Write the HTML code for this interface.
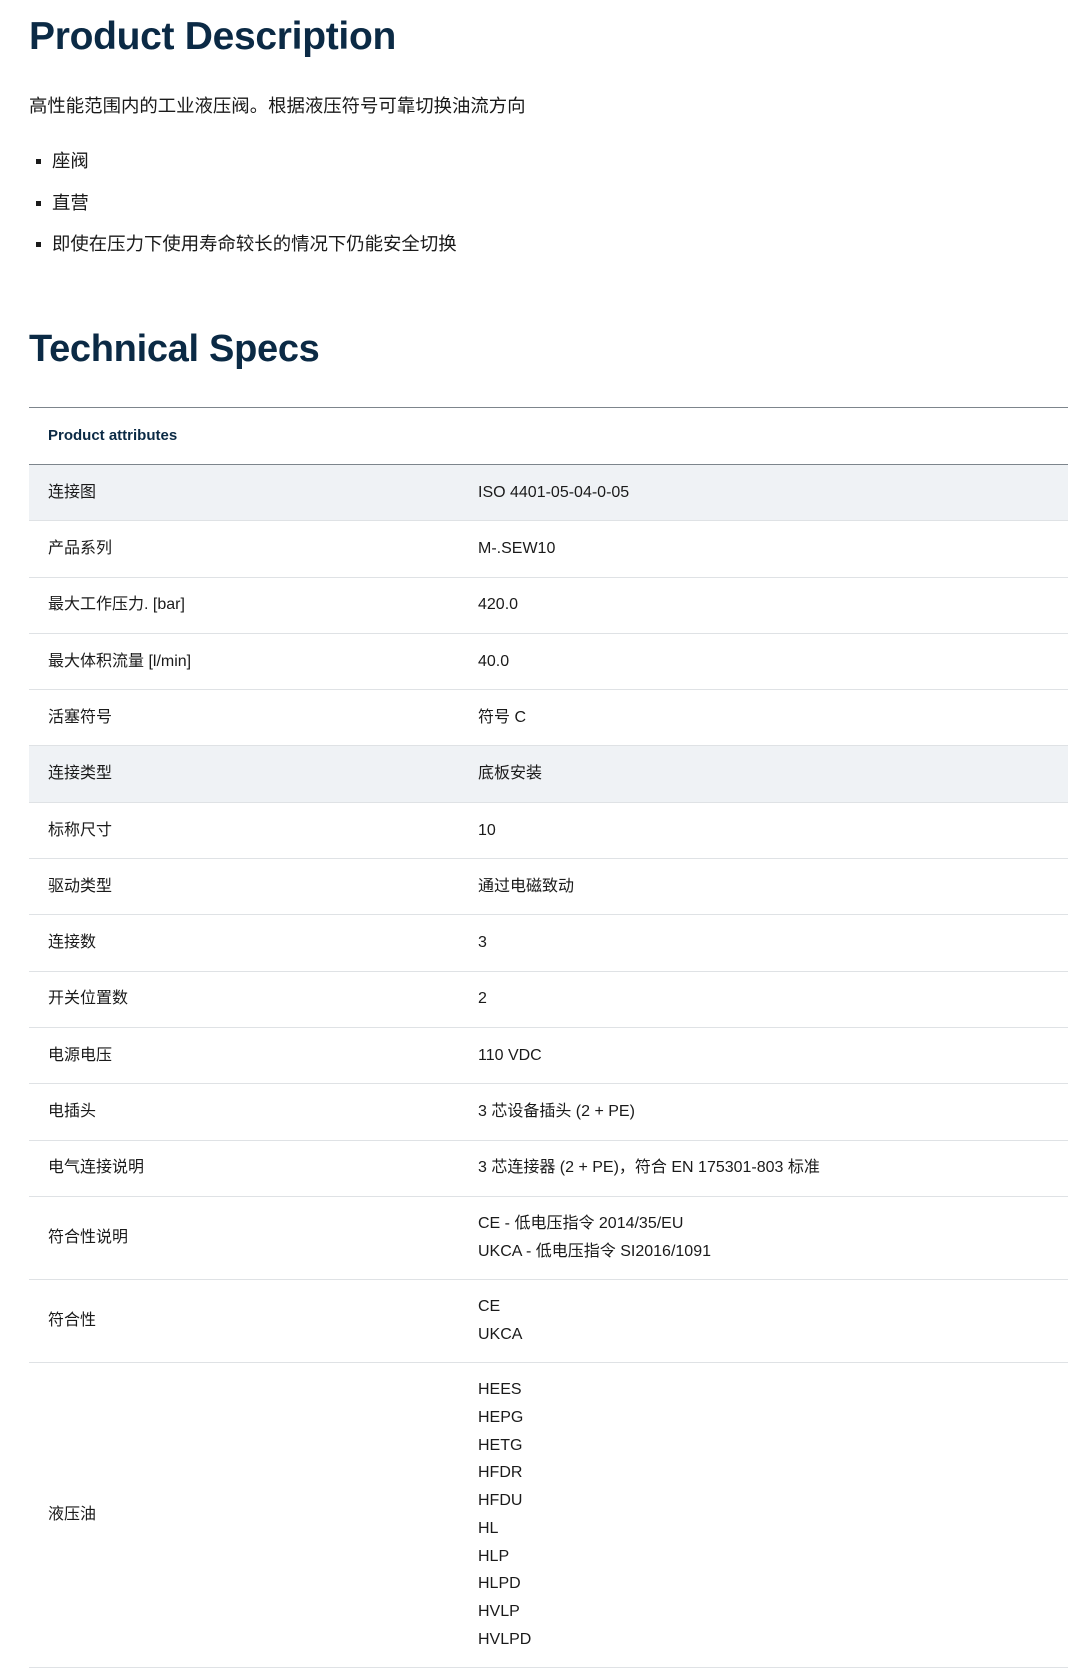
<!DOCTYPE html>
<html><head><meta charset="utf-8"><style>
*{margin:0;padding:0;box-sizing:border-box}
body{width:1068px;height:1671px;background:#fff;font-family:"Liberation Sans","Noto Sans CJK SC",sans-serif;color:#1a1a1a;position:relative;overflow:hidden}
h2{position:absolute;left:29px;font-size:38px;font-weight:bold;color:#0b2a45;line-height:1;letter-spacing:-0.3px}
.p{position:absolute;left:29px;font-size:18.4px;line-height:24px}
.b{position:absolute;left:36px;font-size:18.4px;line-height:24px}
.b:before{content:"";position:absolute;left:0;top:10px;width:5px;height:5px;background:#1a1a1a}
.b span{margin-left:16px}
table{position:absolute;left:29px;top:407px;width:1039px;border-collapse:collapse;font-size:16px}
td{padding:0 0 0 19px;vertical-align:middle;border-bottom:1px solid #dfe2e5;line-height:27.7px}
td:first-child{width:430px}
tr.h td{font-weight:bold;color:#0b2a45;border-top:1px solid #7d858c;border-bottom:1px solid #7d858c;height:57px;font-size:15px}
tr.g td{background:#eff2f5}
.r1 td{height:56.3px}
.r2 td{height:83px}
.r10 td{height:305px}
</style></head><body>
<h2 style="top:17px;font-size:39px">Product Description</h2>
<div class="p" style="top:94px">高性能范围内的工业液压阀。根据液压符号可靠切换油流方向</div>
<div class="b" style="top:149px"><span>座阀</span></div>
<div class="b" style="top:191px"><span>直营</span></div>
<div class="b" style="top:232px"><span>即使在压力下使用寿命较长的情况下仍能安全切换</span></div>
<h2 style="top:330px">Technical Specs</h2>
<table>
<tr class="h"><td colspan="2">Product attributes</td></tr>
<tr class="r1 g"><td>连接图</td><td>ISO 4401-05-04-0-05</td></tr>
<tr class="r1"><td>产品系列</td><td>M-.SEW10</td></tr>
<tr class="r1"><td>最大工作压力. [bar]</td><td>420.0</td></tr>
<tr class="r1"><td>最大体积流量 [l/min]</td><td>40.0</td></tr>
<tr class="r1"><td>活塞符号</td><td>符号 C</td></tr>
<tr class="r1 g"><td>连接类型</td><td>底板安装</td></tr>
<tr class="r1"><td>标称尺寸</td><td>10</td></tr>
<tr class="r1"><td>驱动类型</td><td>通过电磁致动</td></tr>
<tr class="r1"><td>连接数</td><td>3</td></tr>
<tr class="r1"><td>开关位置数</td><td>2</td></tr>
<tr class="r1"><td>电源电压</td><td>110 VDC</td></tr>
<tr class="r1"><td>电插头</td><td>3 芯设备插头 (2 + PE)</td></tr>
<tr class="r1"><td>电气连接说明</td><td>3 芯连接器 (2 + PE)，符合 EN 175301-803 标准</td></tr>
<tr class="r2"><td>符合性说明</td><td>CE - 低电压指令 2014/35/EU<br>UKCA - 低电压指令 SI2016/1091</td></tr>
<tr class="r2"><td>符合性</td><td>CE<br>UKCA</td></tr>
<tr class="r10"><td>液压油</td><td>HEES<br>HEPG<br>HETG<br>HFDR<br>HFDU<br>HL<br>HLP<br>HLPD<br>HVLP<br>HVLPD</td></tr>
</table>
</body></html>
